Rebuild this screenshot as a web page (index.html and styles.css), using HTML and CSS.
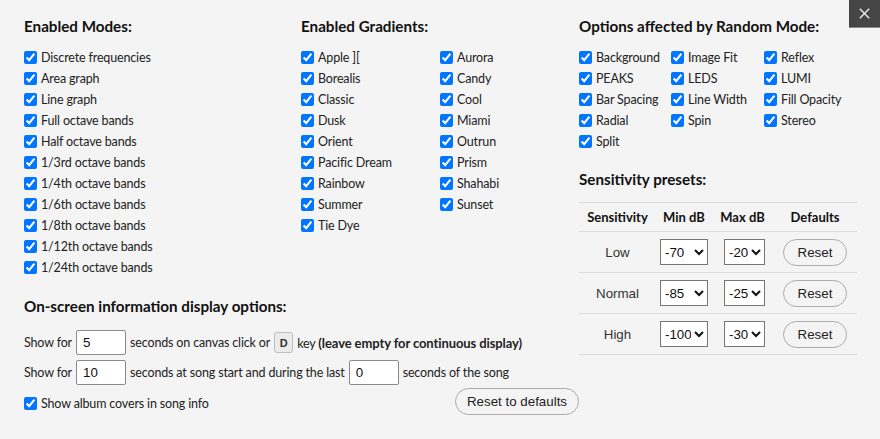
FILE: index.html
```html
<!DOCTYPE html>
<html>
<head>
<meta charset="utf-8">
<link rel="stylesheet" href="styles.css">
</head>
<body>
<button class="close" aria-label="Close"><svg width="11" height="11" viewBox="0 0 11 11"><path d="M0.8 0.8L10.2 10.2M10.2 0.8L0.8 10.2" stroke="#e6e6e6" stroke-width="1.5" fill="none"/></svg></button>
<div class="panel">
  <section class="col modes">
    <h3>Enabled Modes:</h3>
    <label class="cb"><input type="checkbox" checked>Discrete frequencies</label>
    <label class="cb"><input type="checkbox" checked>Area graph</label>
    <label class="cb"><input type="checkbox" checked>Line graph</label>
    <label class="cb"><input type="checkbox" checked>Full octave bands</label>
    <label class="cb"><input type="checkbox" checked>Half octave bands</label>
    <label class="cb"><input type="checkbox" checked>1/3rd octave bands</label>
    <label class="cb"><input type="checkbox" checked>1/4th octave bands</label>
    <label class="cb"><input type="checkbox" checked>1/6th octave bands</label>
    <label class="cb"><input type="checkbox" checked>1/8th octave bands</label>
    <label class="cb"><input type="checkbox" checked>1/12th octave bands</label>
    <label class="cb"><input type="checkbox" checked>1/24th octave bands</label>
  </section>
  <section class="col gradients">
    <h3>Enabled Gradients:</h3>
    <div class="grid2">
      <div>
        <label class="cb"><input type="checkbox" checked>Apple ][</label>
        <label class="cb"><input type="checkbox" checked>Borealis</label>
        <label class="cb"><input type="checkbox" checked>Classic</label>
        <label class="cb"><input type="checkbox" checked>Dusk</label>
        <label class="cb"><input type="checkbox" checked>Orient</label>
        <label class="cb"><input type="checkbox" checked>Pacific Dream</label>
        <label class="cb"><input type="checkbox" checked>Rainbow</label>
        <label class="cb"><input type="checkbox" checked>Summer</label>
        <label class="cb"><input type="checkbox" checked>Tie Dye</label>
      </div>
      <div>
        <label class="cb"><input type="checkbox" checked>Aurora</label>
        <label class="cb"><input type="checkbox" checked>Candy</label>
        <label class="cb"><input type="checkbox" checked>Cool</label>
        <label class="cb"><input type="checkbox" checked>Miami</label>
        <label class="cb"><input type="checkbox" checked>Outrun</label>
        <label class="cb"><input type="checkbox" checked>Prism</label>
        <label class="cb"><input type="checkbox" checked>Shahabi</label>
        <label class="cb"><input type="checkbox" checked>Sunset</label>
      </div>
    </div>
  </section>
  <section class="col random">
    <h3>Options affected by Random Mode:</h3>
    <div class="grid3">
      <label class="cb"><input type="checkbox" checked>Background</label>
      <label class="cb"><input type="checkbox" checked>Image Fit</label>
      <label class="cb"><input type="checkbox" checked>Reflex</label>
      <label class="cb"><input type="checkbox" checked>PEAKS</label>
      <label class="cb"><input type="checkbox" checked>LEDS</label>
      <label class="cb"><input type="checkbox" checked>LUMI</label>
      <label class="cb"><input type="checkbox" checked>Bar Spacing</label>
      <label class="cb"><input type="checkbox" checked>Line Width</label>
      <label class="cb"><input type="checkbox" checked>Fill Opacity</label>
      <label class="cb"><input type="checkbox" checked>Radial</label>
      <label class="cb"><input type="checkbox" checked>Spin</label>
      <label class="cb"><input type="checkbox" checked>Stereo</label>
      <label class="cb"><input type="checkbox" checked>Split</label>
    </div>
    <h3 class="sens-title">Sensitivity presets:</h3>
    <table class="sens">
      <colgroup><col class="c1"><col class="c2"><col class="c3"><col class="c4"></colgroup>
      <thead>
        <tr><th>Sensitivity</th><th>Min dB</th><th>Max dB</th><th>Defaults</th></tr>
      </thead>
      <tbody>
        <tr>
          <td>Low</td>
          <td><select class="sel-min"><option>-70</option></select></td>
          <td><select class="sel-max"><option>-20</option></select></td>
          <td><button class="pill reset">Reset</button></td>
        </tr>
        <tr>
          <td>Normal</td>
          <td><select class="sel-min"><option>-85</option></select></td>
          <td><select class="sel-max"><option>-25</option></select></td>
          <td><button class="pill reset">Reset</button></td>
        </tr>
        <tr>
          <td>High</td>
          <td><select class="sel-min"><option>-100</option></select></td>
          <td><select class="sel-max"><option>-30</option></select></td>
          <td><button class="pill reset">Reset</button></td>
        </tr>
      </tbody>
    </table>
  </section>
  <section class="osd">
    <h3>On-screen information display options:</h3>
    <div class="osd-row"><span>Show for</span><input class="num" type="text" value="5"><span>seconds on canvas click or</span><kbd>D</kbd><span>key&nbsp;<b>(leave empty for continuous display)</b></span></div>
    <div class="osd-row"><span>Show for</span><input class="num" type="text" value="10"><span>seconds at song start and during the last</span><input class="num" type="text" value="0"><span>seconds of the song</span></div>
    <div class="osd-last">
      <label class="cb"><input type="checkbox" checked>Show album covers in song info</label>
      <button class="pill reset-all">Reset to defaults</button>
    </div>
  </section>
</div>
</body>
</html>
```
FILE: styles.css
```css
html, body {
  margin: 0;
  padding: 0;
}
body {
  background: #f4f4f4;
  font-family: "Lato", "Noto Sans", sans-serif;
  font-size: 12.5px;
  letter-spacing: -0.15px;
  color: #222;
  width: 880px;
  height: 439px;
  overflow: hidden;
  position: relative;
}
.close {
  position: absolute;
  top: 0;
  right: 0;
  width: 31px;
  height: 28px;
  padding: 0;
  margin: 0;
  border: 0;
  border-bottom: 1px solid #8a8a8a;
  background: #454545;
  display: flex;
  align-items: center;
  justify-content: center;
}
.panel {
  display: grid;
  grid-template-columns: 277px 278px 277px;
  grid-template-rows: auto auto;
  padding: 16px 24px 0;
}
.modes { grid-column: 1; grid-row: 1; }
.gradients { grid-column: 2; grid-row: 1; }
.random { grid-column: 3; grid-row: 1 / span 2; }
.osd { grid-column: 1 / span 2; grid-row: 2; margin-top: 18px; }

h3 {
  margin: 0 0 11px;
  font-size: 15.2px;
  line-height: 20px;
  font-weight: 700;
  letter-spacing: 0;
  color: #111;
}
.cb {
  display: flex;
  align-items: center;
  height: 21px;
  white-space: nowrap;
}
.cb input {
  width: 13px;
  height: 13px;
  margin: 0 4px 0 0;
  flex: none;
}
.grid2 {
  display: grid;
  grid-template-columns: 139px 139px;
}
.grid3 {
  display: grid;
  grid-template-columns: 92px 93px 93px;
}
.sens-title {
  margin-top: 17px;
  margin-bottom: 13px;
}
.sens {
  border-collapse: collapse;
  width: 278px;
  table-layout: fixed;
}
.c1 { width: 77px; }
.c2 { width: 56px; }
.c3 { width: 61px; }
.c4 { width: 84px; }
.sens th, .sens td {
  border-top: 1px solid #dcdcdc;
  border-bottom: 1px solid #dcdcdc;
  text-align: center;
  padding: 0;
}
.sens th {
  height: 28px;
  font-weight: 700;
  font-size: 13px;
  letter-spacing: 0;
  color: #111;
}
.sens td {
  height: 40px;
  font-family: "Liberation Sans", Arial, sans-serif;
  font-size: 13.33px;
  letter-spacing: 0;
  color: #333;
}
.sens select {
  font-family: "Liberation Sans", Arial, sans-serif;
  font-size: 13.33px;
  height: 26px;
  background: #fff;
  border: 1px solid #767676;
  border-radius: 0;
  color: #111;
  box-sizing: border-box;
}
.sel-min { width: 48px; }
.sel-max { width: 41px; margin-left: 4px; }
.pill {
  font-family: "Liberation Sans", Arial, sans-serif;
  font-size: 13.33px;
  letter-spacing: 0;
  color: #222;
  background: #f4f4f4;
  border: 1px solid #ababab;
  border-radius: 14px;
  height: 27px;
  padding: 0;
}
.reset { width: 64px; }
.reset-all { width: 124px; }

.osd h3 {
  margin-bottom: 14px;
}
.osd-row {
  display: flex;
  align-items: center;
  height: 25px;
  margin-bottom: 5px;
}
.osd-row b {
  font-size: 13px;
  letter-spacing: -0.1px;
}
.num {
  width: 50px;
  height: 25px;
  box-sizing: border-box;
  border: 1px solid #8a8a8a;
  border-radius: 2px;
  background: #fff;
  margin: 0 4px;
  padding: 0 6px;
  font-family: "Liberation Sans", Arial, sans-serif;
  font-size: 13.33px;
  letter-spacing: 0;
  color: #111;
}
kbd {
  display: inline-flex;
  align-items: center;
  justify-content: center;
  width: 19px;
  height: 21px;
  box-sizing: border-box;
  border: 1px solid #bdbdbd;
  border-radius: 3px;
  background: #ebebeb;
  font-family: "Liberation Sans", Arial, sans-serif;
  font-size: 11px;
  font-weight: 700;
  letter-spacing: 0;
  color: #333;
  margin: 0 4px;
}
.osd-last {
  display: flex;
  justify-content: space-between;
  align-items: center;
  margin-top: -2px;
}
.osd-last .cb {
  margin-top: 4px;
}
```
